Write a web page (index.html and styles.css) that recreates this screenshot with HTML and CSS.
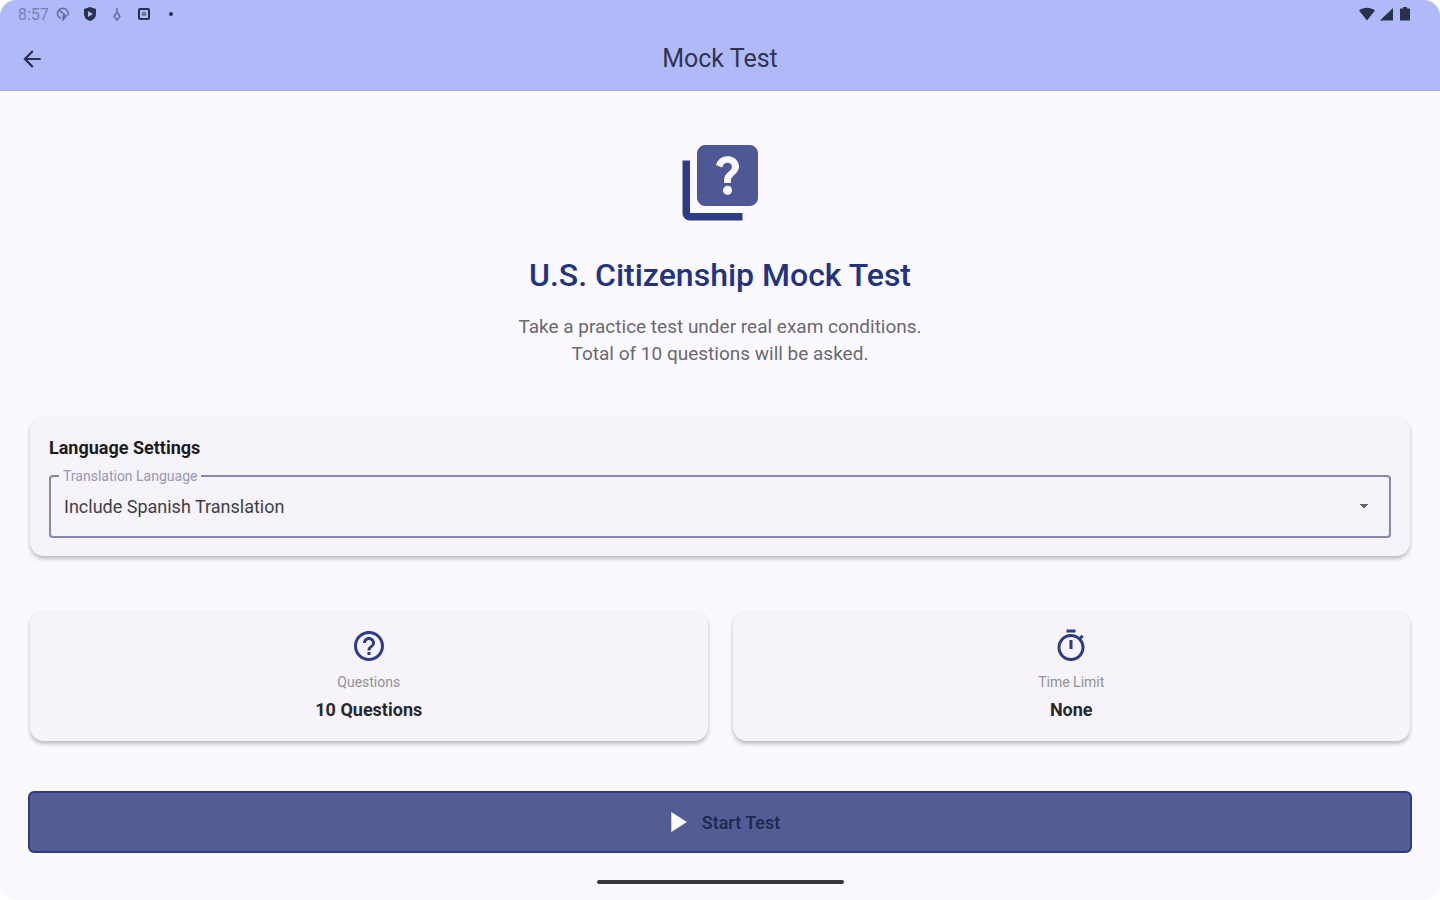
FILE: index.html
```
<!DOCTYPE html>
<html lang="en">
<head>
    <meta charset="UTF-8">
    <meta name="viewport" content="width=device-width, initial-scale=1.0">
    <title>Mock Test</title>
    <link rel="stylesheet" href="styles.css">
</head>
<body>
    <div class="screen">
        <header class="top">
            <div class="status-bar">
                <div class="status-group">
                    <span class="clock">8:57</span>
                    <svg class="faded" width="14" height="14" viewBox="0 0 14 14" fill="none" stroke="currentColor" stroke-width="1.5"><path d="M5 11.5A5.3 5.3 0 1 1 11.8 8.5M3 3l7 6M10 9H7v4z"/></svg>
                    <svg width="14" height="14" viewBox="0 0 14 14"><path fill="currentColor" fill-rule="evenodd" d="M7 0l6 2v5c0 3.5-2.5 6-6 7-3.500-1-6-3.500-6-7V2zM5 4v6l5-3z"/></svg>
                    <svg class="faded" width="14" height="14" viewBox="0 0 14 14" fill="none" stroke="currentColor" stroke-width="1.5"><path d="M7 1v5M7 5l3 4.500L7 13 4 9.500z"/></svg>
                    <svg width="14" height="14" viewBox="0 0 14 14" fill="none" stroke="currentColor"><rect x="2" y="2" width="10" height="10" rx="1" stroke-width="2"/><path d="M5 6h4M5 8h4"/></svg>
                    <svg width="14" height="14" viewBox="0 0 14 14" fill="currentColor"><circle cx="7" cy="7" r="2"/></svg>
                </div>
                <div class="status-group status-right">
                    <svg width="18" height="14" viewBox="0 0 18 14"><path fill="currentColor" d="M1 3.5C5.5-.2 12.5-.2 17 3.5L9 13.5z"/></svg>
                    <svg width="14" height="14" viewBox="0 0 14 14"><path fill="currentColor" d="M0 13.5L13 1v12.5z"/></svg>
                    <svg width="14" height="14" viewBox="0 0 14 14"><path fill="currentColor" d="M5 0h4v1.5h2c.6 0 1 .4 1 1v10c0 .6-.4 1-1 1H3c-.6 0-1-.4-1-1v-10c0-.6.4-1 1-1h2z"/></svg>
                </div>
            </div>
            <div class="app-bar">
                <button class="back" type="button" aria-label="Back">
                    <svg width="26" height="26" viewBox="0 0 24 24"><path fill="currentColor" d="M20 11H7.830l5.590-5.590L12 4l-8 8 8 8 1.410-1.410L7.830 13H20v-2z"/></svg>
                </button>
                <h1>Mock Test</h1>
            </div>
        </header>

        <main>
            <section class="intro">
                <svg width="90" height="90" viewBox="0 0 24 24"><path class="stack" d="M4 6H2v14c0 1.100.9 2 2 2h14v-2H4V6z"/><rect class="sheet" x="6" y="2" width="16" height="16" rx="2"/><path class="mark" d="M13.990 15c-.59 0-1.050-.47-1.050-1.050 0-.59.47-1.040 1.050-1.040.59 0 1.040.45 1.040 1.040-.01.58-.45 1.050-1.040 1.050zm2.500-6.170c-.63.93-1.230 1.210-1.560 1.810-.13.24-.18.4-.18 1.180h-1.520c0-.41-.06-1.080.26-1.650.41-.73 1.180-1.160 1.630-1.800.48-.68.21-1.940-1.140-1.940-.88 0-1.320.67-1.500 1.230l-1.370-.57C11.510 5.960 12.520 5 13.990 5c1.230 0 2.080.56 2.510 1.260.37.61.58 1.730.01 2.570z"/></svg>
                <h2>U.S. Citizenship Mock Test</h2>
                <p>Take a practice test under real exam conditions.<br>Total of 10 questions will be asked.</p>
            </section>

            <section class="card language">
                <h3>Language Settings</h3>
                <fieldset>
                    <legend><label for="language">Translation Language</label></legend>
                    <select id="language">
                        <option>Include Spanish Translation</option>
                    </select>
                </fieldset>
            </section>

            <div class="facts">
                <section class="card fact">
                    <svg width="36" height="36" viewBox="0 0 24 24"><path fill="currentColor" d="M11 18h2v-2h-2v2zm1-16C6.480 2 2 6.480 2 12s4.480 10 10 10 10-4.480 10-10S17.520 2 12 2zm0 18c-4.410 0-8-3.590-8-8s3.590-8 8-8 8 3.590 8 8-3.590 8-8 8zm0-14c-2.210 0-4 1.790-4 4h2c0-1.100.9-2 2-2s2 .9 2 2c0 2-3 1.750-3 5h2c0-2.250 3-2.500 3-5 0-2.210-1.790-4-4-4z"/></svg>
                    <span class="fact-label">Questions</span>
                    <strong>10 Questions</strong>
                </section>
                <section class="card fact">
                    <svg width="36" height="36" viewBox="0 0 24 24"><path fill="currentColor" d="M15 1H9v2h6V1zm-4 13h2V8h-2v6zm8.030-6.610l1.420-1.420c-.43-.51-.9-.99-1.410-1.410l-1.420 1.420C16.070 4.740 14.120 4 12 4c-4.970 0-9 4.030-9 9s4.020 9 9 9 9-4.030 9-9c0-2.120-.74-4.070-1.970-5.610zM12 20c-3.870 0-7-3.130-7-7s3.130-7 7-7 7 3.130 7 7-3.130 7-7 7z"/></svg>
                    <span class="fact-label">Time Limit</span>
                    <strong>None</strong>
                </section>
            </div>

            <button class="start" type="button">
                <svg width="34" height="34" viewBox="0 0 24 24"><path fill="#fff" d="M8 5v14l11-7z"/></svg>
                Start Test
            </button>
        </main>

        <div class="home-bar"></div>
    </div>
</body>
</html>
```
FILE: styles.css
```
* {
    box-sizing: border-box;
}
body {
    margin: 0;
    background-color: #fff;
    color: #1c1b20;
    font-family: Roboto, sans-serif;
}
h1, h2, h3, p {
    margin: 0;
}
svg {
    display: block;
    flex-shrink: 0;
}
.screen {
    min-height: 100vh;
    display: flex;
    flex-direction: column;
    background-color: #fbf8ff;
    border-radius: 16px;
    overflow: hidden;
}
.top {
    background-color: #b1baf9;
    border-bottom: 2px solid #a9b2f4;
}
.status-bar {
    display: flex;
    justify-content: space-between;
    height: 28px;
    padding: 0 28px 0 18px;
    color: #2b304c;
}
.status-group {
    display: flex;
    align-items: center;
    gap: 13px;
}
.status-right {
    gap: 4px;
}
.clock {
    margin-right: -6px;
    font-size: 16px;
    color: #7780b4;
}
.faded {
    color: #626b9b;
}
.app-bar {
    display: grid;
    grid-template-columns: 64px 1fr 64px;
    align-items: center;
    height: 61px;
}
.back {
    display: flex;
    justify-content: center;
    padding: 0;
    border: none;
    background: none;
    color: #2b304c;
    cursor: pointer;
}
h1 {
    text-align: center;
    font-size: 25px;
    font-weight: 400;
    color: #30344f;
}
main {
    padding: 47px 28px 0;
}
.intro {
    display: flex;
    flex-direction: column;
    align-items: center;
    text-align: center;
}
.stack {
    fill: #2c3d86;
}
.sheet {
    fill: #4d5895;
    stroke: #2c3d86;
    stroke-width: 0.2;
}
.mark {
    fill: #fbf8ff;
    stroke: #fbf8ff;
    stroke-width: 0.3;
}
h2 {
    margin-top: 27px;
    font-size: 32px;
    line-height: 40px;
    font-weight: 500;
    color: #23347f;
}
.intro p {
    margin-top: 18px;
    font-size: 19px;
    line-height: 27px;
    color: #6a696e;
}
.card {
    background-color: #f6f3fa;
    border-radius: 14px;
    box-shadow: 0 3px 4px rgba(0, 0, 0, 0.24), 0 0 2px rgba(0, 0, 0, 0.06);
}
.language {
    margin: 50px 2px 0;
    padding: 19px 19px 18px;
}
h3 {
    font-size: 18px;
    line-height: 24px;
    font-weight: 700;
}
fieldset {
    min-width: 0;
    margin: 7px 0 0;
    padding: 0;
    border: 2px solid #8688b0;
    border-radius: 4px;
}
legend {
    margin-left: 8px;
    padding: 0 4px;
    font-size: 14px;
    line-height: 18px;
    color: #9698b8;
}
select {
    display: block;
    width: 100%;
    height: 42px;
    margin-bottom: 9px;
    padding: 0 20px 0 13px;
    border: none;
    appearance: none;
    background: conic-gradient(from -45deg at 50% 100%, #66656b 90deg, transparent 0) right 20px center / 10px 5px no-repeat;
    color: #404045;
    font-family: inherit;
    font-size: 18px;
}
.facts {
    display: grid;
    grid-template-columns: 1fr 1fr;
    gap: 25px;
    margin: 55px 2px 0;
}
.fact {
    display: flex;
    flex-direction: column;
    align-items: center;
    padding: 17px 18px 19px;
    color: #2c3d86;
}
.fact-label {
    margin-top: 8px;
    font-size: 14px;
    line-height: 20px;
    color: #929197;
}
.fact strong {
    margin-top: 6px;
    font-size: 18px;
    line-height: 24px;
    color: #29282d;
}
.start {
    display: flex;
    align-items: center;
    justify-content: center;
    gap: 8px;
    width: 100%;
    height: 62px;
    margin-top: 50px;
    padding: 0;
    border: 2px solid #2c3d86;
    border-radius: 6px;
    background-color: #535c94;
    color: #20264e;
    font-family: inherit;
    font-size: 18px;
    font-weight: 500;
    cursor: pointer;
}
.home-bar {
    width: 247px;
    height: 4px;
    margin: auto auto 16px;
    border-radius: 2px;
    background-color: #38363c;
}
```
